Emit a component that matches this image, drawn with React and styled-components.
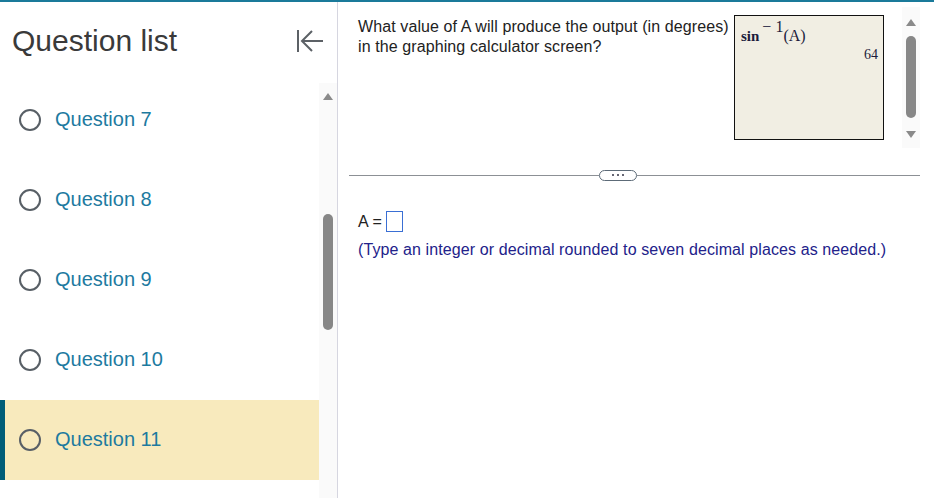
import React from 'react';
import styled, { createGlobalStyle } from 'styled-components';

const Global = createGlobalStyle`
  html, body { margin: 0; padding: 0; background: #fff; }
  body { font-family: "Liberation Sans", Arial, sans-serif; }
`;

const Page = styled.div`
  display: flex;
  height: 496px;
  border-top: 2px solid #1a7a9a;
  overflow: hidden;
`;

const Sidebar = styled.aside`
  width: 337px;
  border-right: 1px solid #d6d6e0;
  display: flex;
  flex-direction: column;
`;

const Header = styled.div`
  height: 78px;
  display: flex;
  align-items: center;
  justify-content: space-between;
  padding: 0 13px 0 12px;
`;

const Title = styled.h1`
  margin: 0;
  font-size: 30px;
  font-weight: normal;
  color: #3a3a3a;
`;

const ListArea = styled.div`
  flex: 1;
  display: flex;
`;

const List = styled.ul`
  list-style: none;
  margin: 0;
  padding: 0;
  flex: 1;
`;

const Item = styled.li`
  height: 80px;
  display: flex;
  align-items: center;
  gap: 14px;
  padding-left: ${p => (p.$active ? '14px' : '19px')};
  padding-bottom: 1px;
  box-sizing: border-box;
  background: ${p => (p.$active ? '#f8eabd' : 'transparent')};
  border-left: ${p => (p.$active ? '5px solid #005d78' : 'none')};
  font-size: 20px;
  color: #1d7a9f;
`;

const Radio = styled.span`
  width: 18px;
  height: 18px;
  border-radius: 50%;
  border: 2.5px solid #585f66;
  flex-shrink: 0;
`;

const Track = styled.div`
  width: 18px;
  margin-top: ${p => p.$top || 0}px;
  margin-left: ${p => p.$left || 0}px;
  height: ${p => p.$height ? `${p.$height}px` : 'auto'};
  background: #fafafa;
  display: flex;
  flex-direction: column;
  align-items: center;
  padding-top: ${p => p.$pad || 10}px;
  box-sizing: border-box;
`;

const Arrow = styled.span`
  width: 0;
  height: 0;
  border-left: 5px solid transparent;
  border-right: 5px solid transparent;
  ${p => p.$down
    ? 'border-top: 7px solid #8a8a8a;'
    : 'border-bottom: 7px solid #8a8a8a;'}
`;

const Thumb = styled.span`
  width: 10px;
  height: ${p => p.$h}px;
  margin-top: ${p => p.$mt}px;
  border-radius: 5px;
  background: #878787;
`;

const Spacer = styled.span`
  flex: ${p => (p.$h ? 'none' : 1)};
  height: ${p => p.$h || 0}px;
`;

const Main = styled.main`
  flex: 1;
  display: flex;
  flex-direction: column;
`;

const TopRow = styled.div`
  height: 168px;
  display: flex;
  padding: 5px 0 0 20px;
  box-sizing: border-box;
`;

const Question = styled.p`
  margin: 10px 0 0 0;
  font-size: 16px;
  line-height: 20px;
  letter-spacing: 0.1px;
  color: #222;
  white-space: nowrap;
  width: 376px;
`;

const Calc = styled.div`
  margin-top: 8px;
  width: 150px;
  height: 125px;
  border: 1px solid #111;
  background: #f1eee3;
  font-family: "Liberation Serif", "Times New Roman", serif;
  color: #1c1c3c;
  padding: 4px 5px;
  box-sizing: border-box;
  display: flex;
  flex-direction: column;
`;

const Expr = styled.div`
  font-size: 16px;
  line-height: 18px;
  padding-top: 7px;
  padding-left: 1px;
  b { font-weight: bold; font-size: 15px; }
  sup { font-size: 16px; position: relative; top: -9px; vertical-align: baseline; line-height: 0; margin: 0 0 0 3px; }
`;

const Result = styled.div`
  align-self: flex-end;
  font-size: 14px;
  margin-top: 2px;
`;

const DividerRow = styled.div`
  height: 10px;
  margin: 0 14px 0 11px;
  display: flex;
  align-items: center;
`;

const Line = styled.div`
  flex: ${p => (p.$w ? 'none' : 1)};
  width: ${p => p.$w || 0}px;
  height: 1px;
  background: #8c9095;
`;

const Pill = styled.span`
  width: 36px;
  height: 9px;
  border: 1px solid #5d6b78;
  border-radius: 6px;
  display: flex;
  align-items: center;
  justify-content: center;
  gap: 3px;
  i { width: 2px; height: 2px; background: #334; border-radius: 1px; }
`;

const Answer = styled.div`
  padding: 31px 0 0 20px;
  font-size: 16px;
  letter-spacing: 0.1px;
  color: #222;
`;

const Eq = styled.div`
  display: flex;
  align-items: center;
  gap: 4px;
  height: 21px;
`;

const Box = styled.span`
  width: 15px;
  height: 19px;
  border: 1px solid #3a6fd4;
`;

const Hint = styled.div`
  margin-top: 9px;
  color: #22228a;
`;

const CollapseIcon = () => (
  <svg width="28" height="26" viewBox="0 0 28 26" fill="none" stroke="#5c6166" strokeWidth="2">
    <line x1="2" y1="2" x2="2" y2="24" />
    <line x1="6" y1="13" x2="27" y2="13" />
    <polyline points="16,3 6,13 16,23" />
  </svg>
);

const questions = [7, 8, 9, 10, 11];

export default function App() {
  return (
    <>
      <Global />
      <Page>
        <Sidebar>
          <Header>
            <Title>Question list</Title>
            <CollapseIcon />
          </Header>
          <ListArea>
            <List>
              {questions.map(n => (
                <Item key={n} $active={n === 11}>
                  <Radio />
                  Question {n}
                </Item>
              ))}
            </List>
            <Track $top={3}>
              <Arrow />
              <Thumb $h={116} $mt={114} />
            </Track>
          </ListArea>
        </Sidebar>
        <Main>
          <TopRow>
            <Question>
              What value of A will produce the output (in degrees)<br />
              in the graphing calculator screen?
            </Question>
            <Calc>
              <Expr><b>sin</b><sup>− 1</sup>(A)</Expr>
              <Result>64</Result>
            </Calc>
            <Track $height={141} $left={18} $pad={12}>
              <Arrow />
              <Thumb $h={82} $mt={10} />
              <Spacer />
              <Arrow $down />
              <Spacer $h={10} />
            </Track>
          </TopRow>
          <DividerRow>
            <Line $w={250} />
            <Pill><i /><i /><i /></Pill>
            <Line />
          </DividerRow>
          <Answer>
            <Eq>A = <Box /></Eq>
            <Hint>(Type an integer or decimal rounded to seven decimal places as needed.)</Hint>
          </Answer>
        </Main>
      </Page>
    </>
  );
}
